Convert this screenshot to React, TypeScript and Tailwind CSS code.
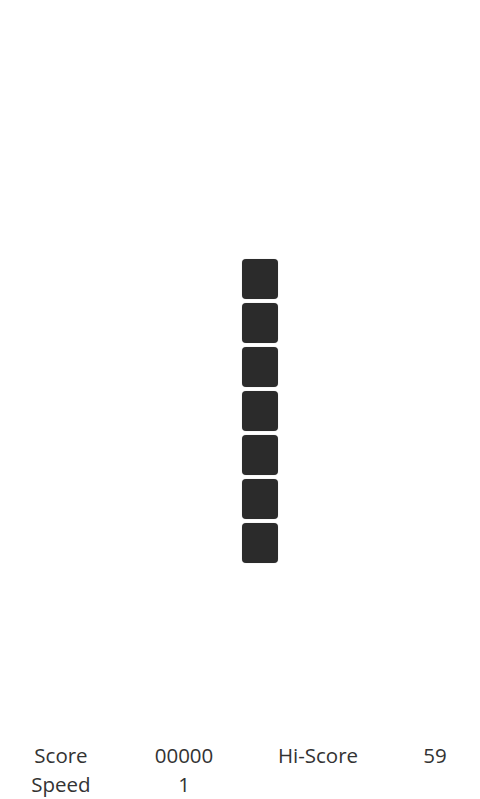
const cells = Array.from({ length: 7 });

const stats: [string, string, string, string][] = [
  ["Score", "00000", "Hi-Score", "59"],
  ["Speed", "1", "", ""],
];

export default function App() {
  return (
    <div className="flex h-[799px] w-[480px] flex-col bg-white font-['Open_Sans',sans-serif] text-[#333333]">
      {/* board */}
      <div className="flex flex-1 flex-col gap-1 pl-[242px] pt-[259px]">
        {cells.map((_, i) => (
          <div key={i} className="h-10 w-9 rounded-[4px] bg-[#2b2b2b] shadow-[0_0_1px_#bbb]" />
        ))}
      </div>

      {/* stats */}
      <div className="grid grid-cols-[122px_124px_144px_90px] pt-px text-[20.5px] leading-[29px]">
        {stats.flat().map((t, i) => (
          <div key={i} className="text-center">
            {t}
          </div>
        ))}
      </div>
    </div>
  );
}
